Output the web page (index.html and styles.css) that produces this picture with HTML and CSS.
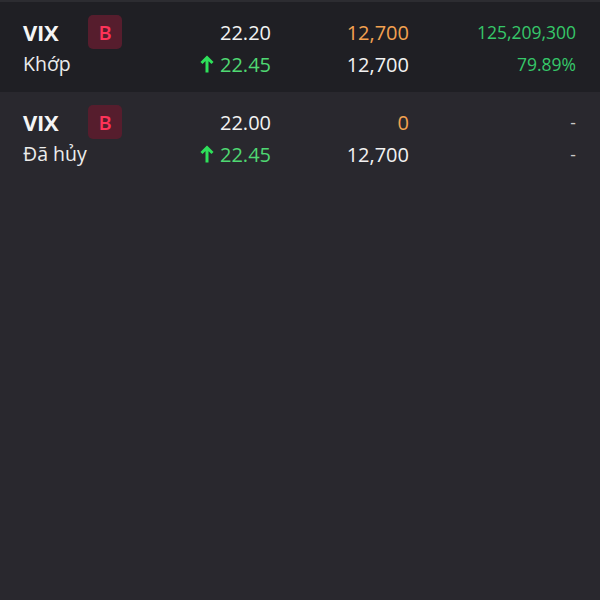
FILE: index.html
```html
<!DOCTYPE html>
<html lang="vi">
<head>
<meta charset="utf-8">
<link rel="stylesheet" href="styles.css">
</head>
<body>
<div class="topline"></div>
<div class="list">
  <div class="row active">
    <div class="sym">VIX</div>
    <div class="badge-cell"><span class="badge">B</span></div>
    <div class="num white">22.20</div>
    <div class="num orange">12,700</div>
    <div class="num green small">125,209,300</div>
    <div class="status">Khớp</div>
    <div></div>
    <div class="num green2"><svg class="arrow" viewBox="0 0 14 18" width="14" height="18"><path d="M7 17.5V2.5M1.5 8l5.5-5.5 5.5 5.5" fill="none" stroke="#2ee05a" stroke-width="3"/></svg>22.45</div>
    <div class="num white">12,700</div>
    <div class="num green small">79.89%</div>
  </div>
  <div class="row">
    <div class="sym">VIX</div>
    <div class="badge-cell"><span class="badge">B</span></div>
    <div class="num white">22.00</div>
    <div class="num orange">0</div>
    <div class="num grey small">-</div>
    <div class="status">Đã hủy</div>
    <div></div>
    <div class="num green2"><svg class="arrow" viewBox="0 0 14 18" width="14" height="18"><path d="M7 17.5V2.5M1.5 8l5.5-5.5 5.5 5.5" fill="none" stroke="#2ee05a" stroke-width="3"/></svg>22.45</div>
    <div class="num white">12,700</div>
    <div class="num grey small">-</div>
  </div>
</div>
</body>
</html>
```
FILE: styles.css
```css
html, body {
  margin: 0;
  padding: 0;
  background: #29282e;
  height: 100%;
}
body {
  font-family: "Open Sans", "Noto Sans", sans-serif;
  color: #f2f2f2;
}
.topline {
  height: 2px;
  background: #2c2c31;
}
.row {
  display: grid;
  grid-template-columns: 65px 1fr 100px 138px 167px;
  grid-template-rows: 34px 30px;
  padding: 13px 24px 13px 23px;
  align-items: center;
}
.row.active {
  background: #1f1f24;
}
.sym {
  font-size: 22px;
  font-weight: 700;
  color: #f5f5f5;
  line-height: 34px;
  letter-spacing: -0.3px;
}
.badge-cell {
  display: flex;
  align-items: center;
}
.badge {
  width: 34px;
  height: 34px;
  border-radius: 5px;
  background: #561d2d;
  color: #ff3358;
  font-size: 20px;
  font-weight: 600;
  display: flex;
  align-items: center;
  justify-content: center;
}
.status {
  font-size: 19.5px;
  color: #ececec;
  line-height: 30px;
}
.num {
  font-size: 20px;
  text-align: right;
  display: flex;
  justify-content: flex-end;
  align-items: center;
}
.num.small {
  font-size: 17.5px;
}
.white { color: #f2f2f2; }
.orange { color: #f3a150; }
.green { color: #36c769; }
.green2 { color: #4fd872; }
.grey { color: #c9c9c9; }
.arrow {
  margin-right: 6px;
  margin-top: -1px;
}
```
